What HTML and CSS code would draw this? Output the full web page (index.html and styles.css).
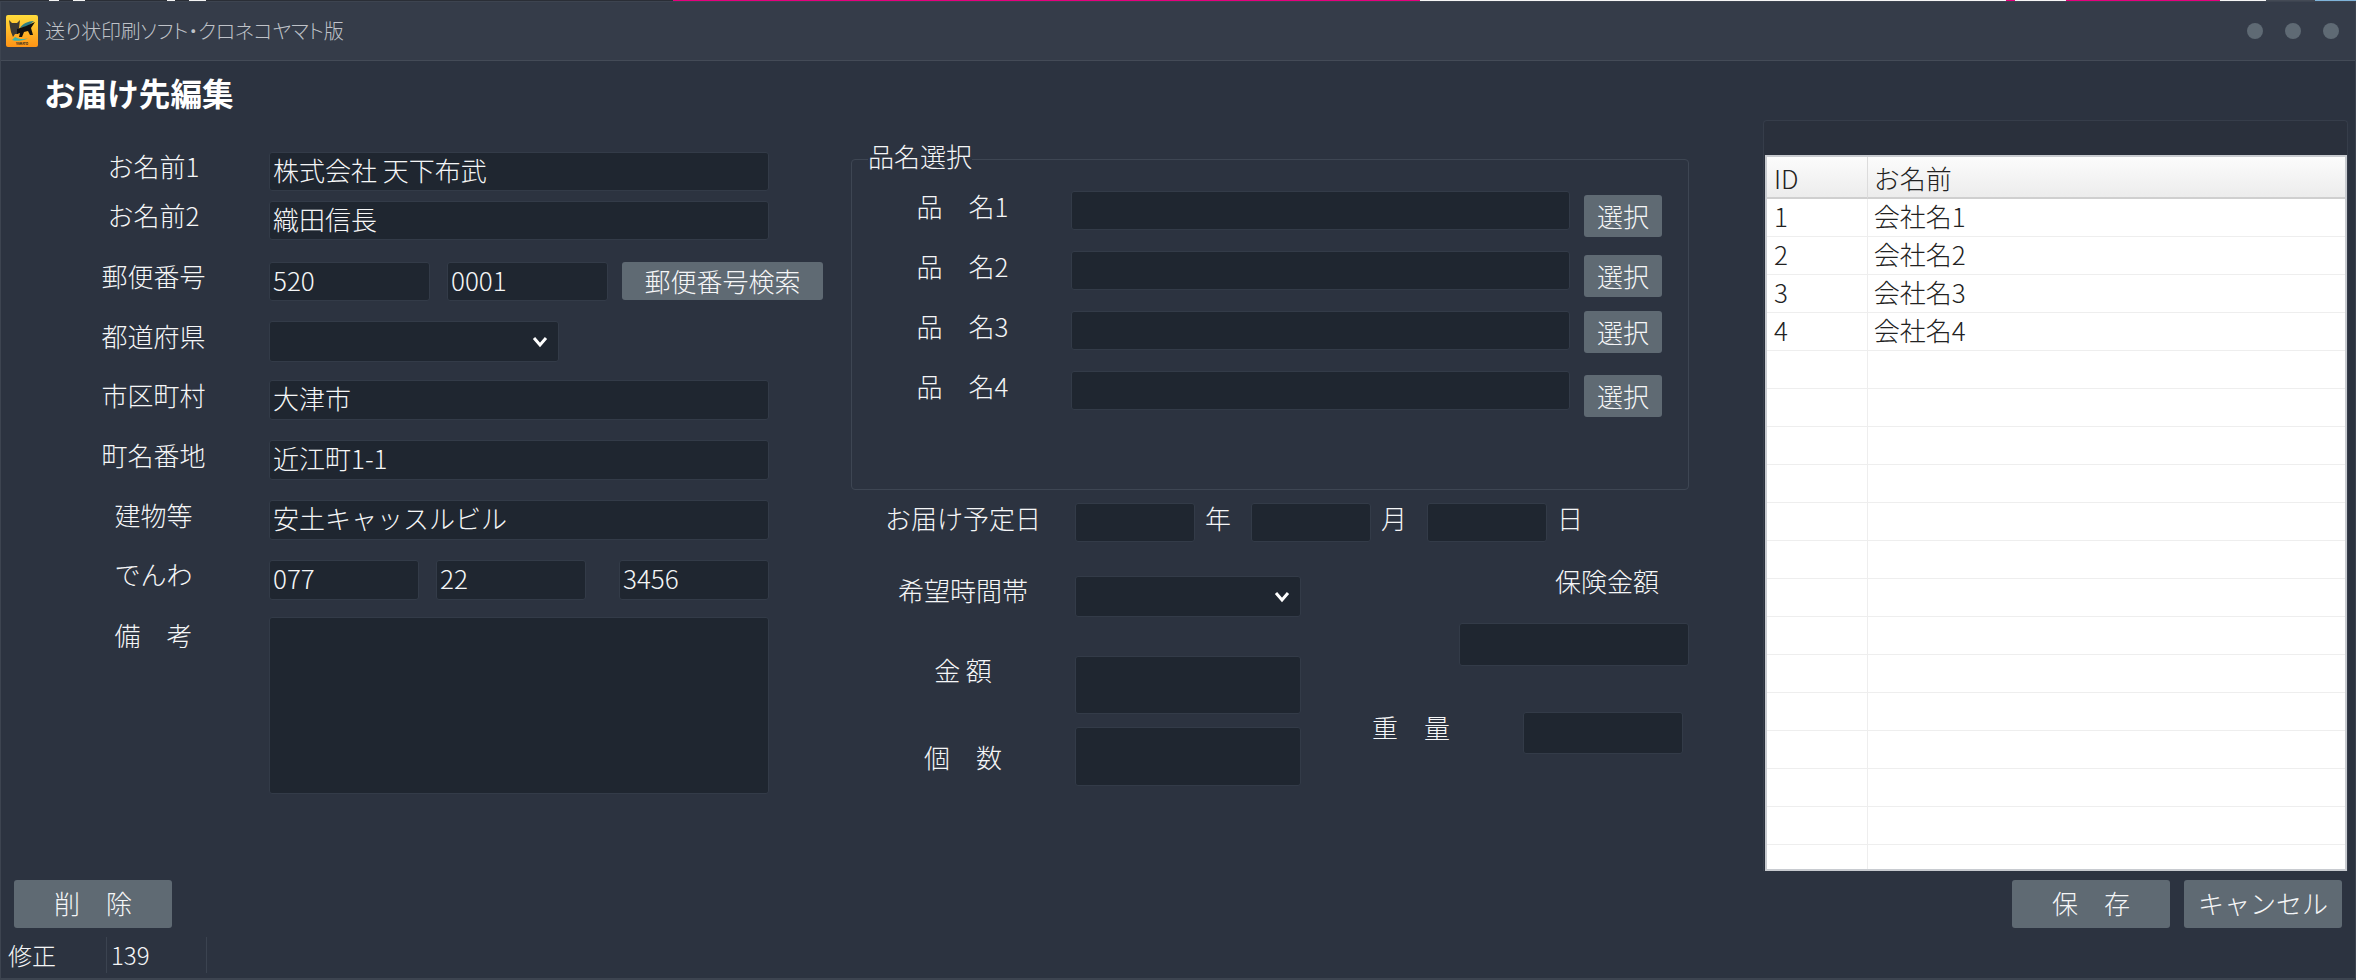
FILE: index.html
```html
<!DOCTYPE html>
<html lang="ja">
<head>
<meta charset="utf-8">
<title>送り状印刷ソフト・クロネコヤマト版</title>
<link rel="stylesheet" href="styles.css">
</head>
<body>
<div class="backdrop"></div>
<div class="window">
  <header class="titlebar">
    <svg class="logo" viewBox="0 0 32 32" aria-hidden="true">
      <defs>
        <linearGradient id="logoBg" x1="0" y1="0" x2="0" y2="1">
          <stop offset="0" stop-color="#ffdc3c"/>
          <stop offset="1" stop-color="#ff9416"/>
        </linearGradient>
      </defs>
      <rect width="32" height="32" rx="2" fill="url(#logoBg)"/>
      <path d="M6 25 C12 27 20 25 22 23 C18 25 12 24 9 22 Z" fill="#3fb3a8"/>
      <path d="M28 6 C22 6 16 9 14 13 L22 11 Z" fill="#2f7f86"/>
      <path d="M3 5 L6 8 L11 8 L14 5 L13 13 L11 16 L12 19 L9 19 L7 22 L5 17 L4 12 Z" fill="#3b3a34"/>
      <path d="M11 14 L20 11 L29 7 L25 13 L27 20 L24 20 L22 16 L18 17 L16 22 L13 22 L14 18 L11 19 Z" fill="#111"/>
      <text x="16" y="30" class="logo-text">YAMATO</text>
    </svg>
    <span class="app-name">送り状印刷ソフト・クロネコヤマト版</span>
    <div class="dots"><i></i><i></i><i></i></div>
  </header>

  <h1 class="page-title">お届け先編集</h1>

  <main class="columns">
    <section class="address">
      <label class="lbl">お名前1</label>
      <input class="fld" value="株式会社 天下布武">
      <label class="lbl">お名前2</label>
      <input class="fld" value="織田信長">
      <label class="lbl">郵便番号</label>
      <div class="zip">
        <input class="fld" value="520">
        <input class="fld" value="0001">
        <button class="btn zip-btn">郵便番号検索</button>
      </div>
      <label class="lbl lo">都道府県</label>
      <div class="select pref">
        <select class="fld tall"></select>
        <svg class="chev" viewBox="0 0 16 12"><path d="M2 2 L8 9 L14 2"/></svg>
      </div>
      <label class="lbl lo">市区町村</label>
      <input class="fld tall" value="大津市">
      <label class="lbl lo">町名番地</label>
      <input class="fld tall" value="近江町1-1">
      <label class="lbl lo">建物等</label>
      <input class="fld tall" value="安土キャッスルビル">
      <label class="lbl">でんわ</label>
      <div class="tel">
        <input class="fld tall" value="077">
        <input class="fld tall" value="22">
        <input class="fld tall" value="3456">
      </div>
      <label class="lbl memo-lbl">備　考</label>
      <textarea class="fld memo"></textarea>
    </section>

    <section class="goods">
      <fieldset class="group">
        <legend>品名選択</legend>
        <div class="item">
          <label class="lbl">品　名1</label>
          <input class="fld item-in">
          <button class="btn pick">選択</button>
        </div>
        <div class="item">
          <label class="lbl">品　名2</label>
          <input class="fld item-in">
          <button class="btn pick">選択</button>
        </div>
        <div class="item up">
          <label class="lbl">品　名3</label>
          <input class="fld item-in">
          <button class="btn pick">選択</button>
        </div>
        <div class="item">
          <label class="lbl">品　名4</label>
          <input class="fld item-in">
          <button class="btn pick">選択</button>
        </div>
      </fieldset>

      <div class="date">
        <label class="lbl">お届け予定日</label>
        <input class="fld date-in"><span class="unit">年</span>
        <input class="fld date-in"><span class="unit">月</span>
        <input class="fld date-in"><span class="unit">日</span>
      </div>

      <div class="lower">
        <div class="lower-left">
          <label class="lbl">希望時間帯</label>
          <div class="select">
            <select class="fld time"></select>
            <svg class="chev" viewBox="0 0 16 12"><path d="M2 2 L8 9 L14 2"/></svg>
          </div>
          <label class="lbl">金 額</label>
          <input class="fld amount-in">
          <label class="lbl count">個　数</label>
          <input class="fld count-in">
        </div>
        <div class="lower-right">
          <label class="lbl ins">保険金額</label>
          <input class="fld ins-in">
          <div class="weight">
            <label class="lbl">重　量</label>
            <input class="fld weight-in">
          </div>
        </div>
      </div>
    </section>

    <aside class="list">
      <table class="grid">
        <thead>
          <tr><th class="c-id">ID</th><th>お名前</th></tr>
        </thead>
        <tbody>
          <tr><td class="c-id">1</td><td>会社名1</td></tr>
          <tr><td class="c-id">2</td><td>会社名2</td></tr>
          <tr><td class="c-id">3</td><td>会社名3</td></tr>
          <tr><td class="c-id">4</td><td>会社名4</td></tr>
          <tr><td class="c-id"></td><td></td></tr>
          <tr><td class="c-id"></td><td></td></tr>
          <tr><td class="c-id"></td><td></td></tr>
          <tr><td class="c-id"></td><td></td></tr>
          <tr><td class="c-id"></td><td></td></tr>
          <tr><td class="c-id"></td><td></td></tr>
          <tr><td class="c-id"></td><td></td></tr>
          <tr><td class="c-id"></td><td></td></tr>
          <tr><td class="c-id"></td><td></td></tr>
          <tr><td class="c-id"></td><td></td></tr>
          <tr><td class="c-id"></td><td></td></tr>
          <tr><td class="c-id"></td><td></td></tr>
          <tr><td class="c-id"></td><td></td></tr>
          <tr><td class="c-id"></td><td></td></tr>
        </tbody>
      </table>
    </aside>
  </main>

  <footer class="actions">
    <button class="btn wide">削　除</button>
    <div class="actions-right">
      <button class="btn wide">保　存</button>
      <button class="btn wide">キャンセル</button>
    </div>
  </footer>

  <div class="status">
    <span class="st-mode">修正</span>
    <span class="st-id">139</span>
  </div>
</div>
</body>
</html>
```
FILE: styles.css
```css
* { box-sizing: border-box; }
html, body { margin: 0; height: 100%; background: #2c3340; overflow: hidden; }
body {
  font-family: "Noto Sans CJK JP", "Noto Sans", sans-serif;
  font-weight: 300;
  font-size: 26px;
  color: #f5f6f7;
  width: 2356px;
  height: 980px;
}
.backdrop {
  height: 1px;
  background: linear-gradient(90deg,
    #2a2e36 0, #2a2e36 49px, #f4f4f4 49px, #f4f4f4 59px,
    #2a2e36 59px, #2a2e36 73px, #f4f4f4 73px, #f4f4f4 85px,
    #2a2e36 85px, #2a2e36 167px, #f4f4f4 167px, #f4f4f4 175px,
    #2a2e36 175px, #2a2e36 189px, #f4f4f4 189px, #f4f4f4 206px,
    #2a2e36 206px, #2a2e36 673px, #e6007e 673px, #e6007e 1420px,
    #f6f6f6 1420px, #f6f6f6 2006px, #e6007e 2006px, #e6007e 2015px,
    #f6f6f6 2015px, #f6f6f6 2066px, #e6007e 2066px, #e6007e 2220px,
    #f6f6f6 2220px, #f6f6f6 2266px, #444a55 2266px, #444a55 2315px,
    #7fb3d9 2315px);
}
.window {
  height: 979px;
  border: 1px solid #3d4450;
  border-bottom-width: 2px;
  background: #2c3340;
  display: flex;
  flex-direction: column;
}

/* title bar */
.titlebar {
  flex: none;
  height: 59px;
  padding: 0 0 1px 5px;
  background: #353c49;
  border-bottom: 1px solid #444b57;
  display: flex;
  align-items: center;
}
.logo { width: 32px; height: 32px; flex: none; }
.logo-text { font-size: 3px; font-weight: 700; text-anchor: middle; fill: #222; }
.app-name {
  margin-left: 7px;
  font-size: 20px;
  color: #bfc2c8;
  font-feature-settings: "palt";
  letter-spacing: -0.25px;
}
.dots { margin-left: auto; margin-right: 16px; display: flex; gap: 22px; }
.dots i { width: 16px; height: 16px; border-radius: 50%; background: #5f6a74; }

.page-title {
  flex: none;
  height: 59px;
  margin: 0;
  padding: 9px 0 0 43px;
  font-size: 31.6px;
  line-height: 44px;
  font-weight: 700;
  color: #fff;
}

/* shared controls */
.fld {
  display: block;
  width: 100%;
  height: 39px;
  margin: 0;
  padding: 0 3px 5px;
  background: #1f2630;
  border: 1px solid #333b48;
  border-radius: 3px;
  color: #f5f6f7;
  font: inherit;
  outline: none;
  resize: none;
  appearance: none;
}
.fld.tall { height: 40px; }
.lbl { display: block; text-align: center; line-height: 30px; white-space: nowrap; }
.btn {
  background: #5f6a73;
  border: none;
  border-radius: 3px;
  color: #f5f6f7;
  font: inherit;
  padding: 0;
  white-space: nowrap;
}
.select { position: relative; }
.chev {
  position: absolute;
  right: 11px;
  top: 15px;
  width: 16px;
  height: 12px;
  fill: none;
  stroke: #fff;
  stroke-width: 3;
  pointer-events: none;
}

/* columns */
.columns { flex: none; height: 751px; display: flex; align-items: flex-start; }

.address {
  flex: none;
  width: 731px;
  margin-left: 37px;
  padding-top: 32px;
  display: grid;
  grid-template-columns: 231px 500px;
  grid-template-rows: 49px 61px 59px 59px 60px 60px 60px 57px 177px;
}
.address .lbl { margin-top: -1px; }
.address .lbl.lo { margin-top: 0; }
.address .lbl.memo-lbl { margin-top: 3px; }
.memo { height: 177px; }
.zip { display: grid; grid-template-columns: 161px 161px 198px; column-gap: 17px; }
.zip-btn { height: 38px; margin-left: -3px; padding-bottom: 2px; }
.tel { display: grid; grid-template-columns: 150px 150px 150px; column-gap: 17px; }
.tel .fld:nth-child(3) { margin-left: 16px; }
.pref { width: 290px; }
.pref .fld { height: 41px; }

.goods { flex: none; width: 838px; margin-left: 82px; padding-top: 26px; }
.group {
  height: 344px;
  margin: 0;
  padding: 0 0 0 16px;
  border: 1px solid #3e4653;
  border-radius: 4px;
}
.group legend {
  padding: 0;
  margin-left: 0;
  height: 26px;
  line-height: 20px;
  font-size: 26px;
}
.item {
  display: grid;
  grid-template-columns: 189px 499px 78px;
  column-gap: 14px;
  height: 60px;
  align-items: start;
}
.item:first-of-type { margin-top: 19px; }
.pick { height: 42px; margin-top: 4px; padding-bottom: 1px; }
.up .pick { margin-top: 0; }
.item .lbl { margin-top: 0; }

.date {
  display: flex;
  align-items: flex-start;
  margin-top: 13px;
}
.date .lbl { width: 224px; }
.date-in { width: 120px; }
.unit { width: 56px; padding-left: 10px; line-height: 30px; flex: none; }

.lower { display: flex; margin-top: 34px; }
.lower-left {
  flex: none;
  width: 450px;
  display: grid;
  grid-template-columns: 224px 226px;
  grid-template-rows: 80px 71px 59px;
}
.lower-left .lbl { margin-top: -1px; }
.lower-left .lbl.count { margin-top: 15px; }
.time { height: 41px; }
.amount-in { height: 58px; }
.count-in { height: 59px; }
.lower-right { flex: none; width: 388px; display: flex; flex-direction: column; align-items: flex-end; }
.ins { width: 102px; margin: -10px 32px 0 0; }
.ins-in { width: 230px; height: 43px; margin-top: 27px; }
.weight { display: flex; align-items: flex-start; width: 100%; margin-top: 46px; }
.weight .lbl { width: 75px; margin-left: 71px; }
.weight-in { width: 160px; height: 42px; margin-left: 76px; }

/* list */
.list {
  flex: none;
  width: 585px;
  height: 751px;
  margin-left: 74px;
  padding: 34px 1px 0;
  background: #2a303c;
  border: 1px solid #363d4a;
  border-bottom: none;
  border-radius: 4px 4px 0 0;
}
.grid {
  width: 582px;
  height: 716px;
  display: block;
  overflow: hidden;
  background: #fff;
  color: #222;
  border: 2px solid #c8cbd0;
  border-collapse: separate;
  border-spacing: 0;
  table-layout: fixed;
}
.grid th {
  height: 42px;
  padding: 0 0 0 6px;
  text-align: left;
  font-weight: 300;
  background: linear-gradient(#fcfcfc, #ececec);
  border-bottom: 2px solid #cfcfcf;
  border-right: 1px solid #dcdcdc;
}
.grid th.c-id { padding-left: 7px; }
.grid th:last-child { width: 478px; border-right: none; }
.grid .c-id { width: 101px; }
.grid td {
  height: 38px;
  padding: 0 0 3px 6px;
  border-bottom: 1px solid #eeeeee;
  border-right: 1px solid #eeeeee;
  line-height: 30px;
}
.grid td:last-child { border-right: none; }
.grid td.c-id { padding-left: 7px; }

/* bottom */
.actions {
  flex: none;
  height: 57px;
  padding: 9px 13px 0 13px;
  display: flex;
  justify-content: space-between;
  align-items: flex-start;
}
.actions-right { display: flex; gap: 14px; }
.wide { width: 158px; height: 48px; padding-bottom: 3px; }
.status { flex: none; height: 36px; margin-top: 9px; display: flex; align-items: stretch; line-height: 36px; }
.st-mode { width: 106px; padding-left: 7px; font-size: 24px; border-right: 1px solid #3b4350; }
.st-id { width: 100px; padding-left: 4px; font-size: 24px; border-right: 1px solid #3b4350; }
```
